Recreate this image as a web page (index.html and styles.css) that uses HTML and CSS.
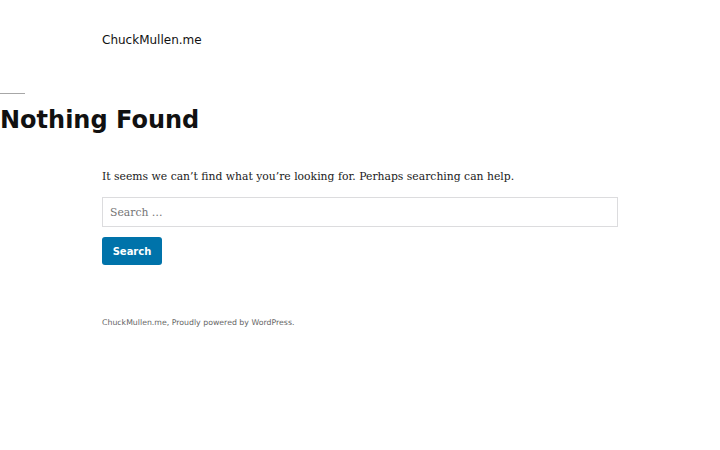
FILE: index.html
```html
<!DOCTYPE html>
<html lang="en">
<head>
<meta charset="utf-8">
<title>Nothing Found – ChuckMullen.me</title>
<link rel="stylesheet" href="styles.css">
</head>
<body>
<header class="site-header">
  <p class="site-title">ChuckMullen.me</p>
</header>
<main class="site-main">
  <header class="page-header">
    <h1 class="page-title">Nothing Found</h1>
  </header>
  <div class="page-content">
    <p class="message">It seems we can’t find what you’re looking for. Perhaps searching can help.</p>
    <form class="search-form">
      <input class="search-field" type="search" placeholder="Search …">
      <button class="search-submit" type="button">Search</button>
    </form>
  </div>
</main>
<footer class="site-footer">
  <p class="site-info">ChuckMullen.me, Proudly powered by WordPress.</p>
</footer>
</body>
</html>
```
FILE: styles.css
```css
html, body {
  margin: 0;
  padding: 0;
  background: #fff;
}
body {
  font-family: "DejaVu Serif", serif;
  color: #1e1e1e;
}
.site-header {
  padding: 31px 102px 0;
}
.site-title {
  margin: 0;
  font-family: "DejaVu Sans", sans-serif;
  font-size: 12px;
  line-height: 18px;
  color: #111;
}
.site-main {
  padding-top: 44px;
}
.page-header {
  display: flex;
  flex-direction: column;
}
.page-header::before {
  content: "";
  display: block;
  width: 25px;
  height: 1px;
  background: #a7a7a7;
}
.page-title {
  margin: 11px 0 0;
  font-family: "DejaVu Sans", sans-serif;
  font-weight: 700;
  font-size: 24px;
  line-height: 30px;
  color: #111;
}
.page-content {
  padding: 33px 102px 0;
}
.message {
  margin: 0;
  font-family: "DejaVu Serif", serif;
  font-size: 10.8px;
  line-height: 18px;
  color: #1a1a1a;
}
.search-form {
  display: flex;
  flex-direction: column;
  align-items: flex-start;
  gap: 10px;
  margin-top: 11px;
}
.search-field {
  box-sizing: border-box;
  width: 516px;
  height: 30px;
  border: 1px solid #dcdcde;
  padding: 0 7px;
  font-family: "DejaVu Serif", serif;
  font-size: 10.8px;
  color: #333;
  background: #fff;
  outline: none;
}
.search-field::placeholder {
  color: #757575;
}
.search-submit {
  box-sizing: border-box;
  height: 28px;
  width: 60px;
  border: 0;
  border-radius: 3px;
  background: #0073aa;
  color: #fff;
  font-family: "DejaVu Sans", sans-serif;
  font-weight: 700;
  font-size: 10px;
  padding: 0;
}
.site-footer {
  padding: 52px 102px 0;
}
.site-info {
  margin: 0;
  font-family: "DejaVu Sans", sans-serif;
  font-size: 7.8px;
  line-height: 12px;
  color: #666;
}
```
